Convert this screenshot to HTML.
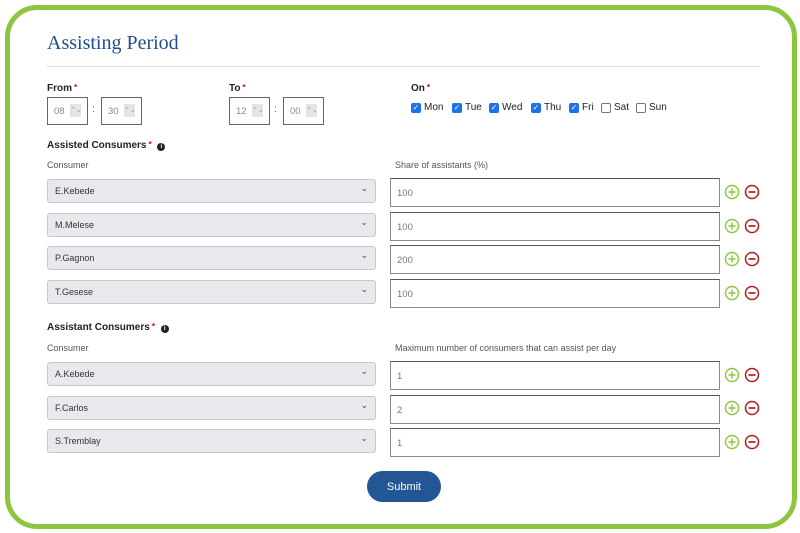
<!DOCTYPE html>
<html><head><style>
*{box-sizing:border-box;margin:0;padding:0}
body{width:800px;height:533px;background:#fff;font-family:"Liberation Sans",sans-serif;position:relative;overflow:hidden;color:#222}
.frame{position:absolute;left:5px;top:5px;width:792px;height:524px;border:5px solid #8cc63f;border-radius:32px}
.a{position:absolute}
h1{position:absolute;left:47px;top:32px;font-family:"Liberation Serif",serif;font-weight:normal;font-size:20px;color:#1f4e8c}
.hr{position:absolute;left:47px;top:66px;width:713px;height:1px;background:#ddd}
.lbl{position:absolute;font-size:10px;font-weight:bold;color:#222}
.lbl i{color:#d00;font-style:normal;font-size:8px;vertical-align:top;margin-left:2px}
.sub{position:absolute;font-size:9px;color:#555}
.time{position:absolute;width:41px;height:28px;border:1.5px solid #666;font-size:9.5px;color:#888;padding:8px 0 0 6px}
.time span{position:absolute;left:22px;top:6px;width:11px;height:13px;background:#e4e4e4;font-size:7px;color:#999;text-align:center;line-height:13px}
.colon{position:absolute;font-size:10px;color:#555}
.cb{position:absolute;top:102px;font-size:10px;color:#222;display:flex;align-items:center}
.cb b{display:inline-block;width:10px;height:10px;border-radius:2px;margin-right:3px;font-weight:normal}
.on{background:#1a73e8;color:#fff;font-size:8px;line-height:10px;text-align:center}
.off{border:1px solid #777;background:#fff}
.sel{position:absolute;left:47px;width:329px;height:24px;background:#e9e9ed;border:1px solid #c8c8cc;border-radius:3px;font-size:9px;color:#333;padding:6px 0 0 7px}
.sel:after{content:"⌄";position:absolute;right:7px;top:3px;font-size:9px;color:#444}
.inp{position:absolute;left:390px;width:330px;height:29px;border:1.5px solid #8a8a92;font-size:9.5px;color:#777;padding:9px 0 0 6px;border-top-color:#555}
.btn{position:absolute;left:367px;top:471px;width:74px;height:31px;background:#235694;border-radius:16px;color:#fff;font-size:11px;text-align:center;line-height:31px}
</style></head><body>
<div class="frame"></div>
<h1>Assisting Period</h1>
<div class="hr"></div>
<div class="lbl" style="left:47px;top:83px">From<i>*</i></div>
<div class="lbl" style="left:229px;top:83px">To<i>*</i></div>
<div class="lbl" style="left:411px;top:83px">On<i>*</i></div>
<div class="time" style="left:47px;top:97px">08<span>⌃⌄</span></div>
<div class="colon" style="left:92px;top:104px">:</div>
<div class="time" style="left:101px;top:97px">30<span>⌃⌄</span></div>
<div class="time" style="left:229px;top:97px">12<span>⌃⌄</span></div>
<div class="colon" style="left:274px;top:104px">:</div>
<div class="time" style="left:283px;top:97px">00<span>⌃⌄</span></div>
<div class="cb" style="left:411px"><b class="on">✓</b>Mon</div>
<div class="cb" style="left:452px"><b class="on">✓</b>Tue</div>
<div class="cb" style="left:489px"><b class="on">✓</b>Wed</div>
<div class="cb" style="left:531px"><b class="on">✓</b>Thu</div>
<div class="cb" style="left:569px"><b class="on">✓</b>Fri</div>
<div class="cb" style="left:601px"><b class="off"></b>Sat</div>
<div class="cb" style="left:636px"><b class="off"></b>Sun</div>

<div class="lbl" style="left:47px;top:140px">Assisted Consumers<i>*</i> <span style="display:inline-block;width:8px;height:8px;border-radius:50%;background:#222;color:#fff;font-size:6px;text-align:center;line-height:8px;margin-left:3px">i</span></div>
<div class="sub" style="left:47px;top:160px">Consumer</div>
<div class="sub" style="left:395px;top:160px">Share of assistants (%)</div>

<div class="lbl" style="left:47px;top:322px">Assistant Consumers<i>*</i> <span style="display:inline-block;width:8px;height:8px;border-radius:50%;background:#222;color:#fff;font-size:6px;text-align:center;line-height:8px;margin-left:3px">i</span></div>
<div class="sub" style="left:47px;top:343px">Consumer</div>
<div class="sub" style="left:395px;top:343px">Maximum number of consumers that can assist per day</div>

<div class="sel" style="top:179px">E.Kebede</div><div class="inp" style="top:178px">100</div>
<div class="sel" style="top:213px">M.Melese</div><div class="inp" style="top:212px">100</div>
<div class="sel" style="top:246px">P.Gagnon</div><div class="inp" style="top:245px">200</div>
<div class="sel" style="top:280px">T.Gesese</div><div class="inp" style="top:279px">100</div>
<div class="sel" style="top:362px">A.Kebede</div><div class="inp" style="top:361px">1</div>
<div class="sel" style="top:396px">F.Carlos</div><div class="inp" style="top:395px">2</div>
<div class="sel" style="top:429px">S.Tremblay</div><div class="inp" style="top:428px">1</div>

<svg class="a" style="left:0;top:0" width="800" height="533">
<defs>
<g id="p"><circle r="6.5" fill="none" stroke="#8cc63f" stroke-width="1.4"/><path d="M-3.5 0H3.5M0-3.5V3.5" stroke="#8cc63f" stroke-width="1.4"/></g>
<g id="m"><circle r="6.5" fill="none" stroke="#b01c1c" stroke-width="1.5"/><path d="M-3.5 0H3.5" stroke="#b01c1c" stroke-width="1.7"/></g>
</defs>
<use href="#p" x="732" y="192"/><use href="#m" x="752" y="192"/>
<use href="#p" x="732" y="226"/><use href="#m" x="752" y="226"/>
<use href="#p" x="732" y="259"/><use href="#m" x="752" y="259"/>
<use href="#p" x="732" y="293"/><use href="#m" x="752" y="293"/>
<use href="#p" x="732" y="375"/><use href="#m" x="752" y="375"/>
<use href="#p" x="732" y="408"/><use href="#m" x="752" y="408"/>
<use href="#p" x="732" y="442"/><use href="#m" x="752" y="442"/>
</svg>
<div class="btn" style="line-height:32px">Submit</div>
</body></html>
